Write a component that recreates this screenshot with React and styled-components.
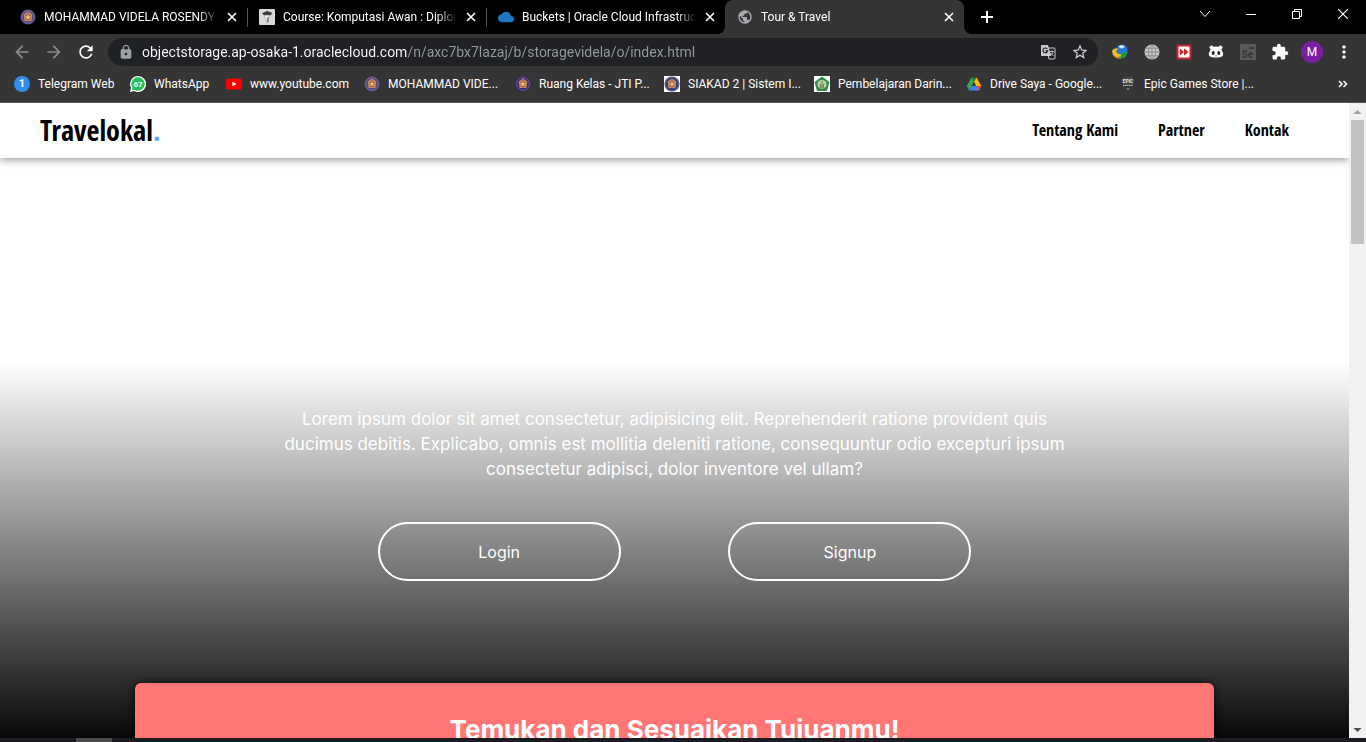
import React from "react";
import styled, { createGlobalStyle } from "styled-components";
import {
  MdArrowBack, MdArrowForward, MdRefresh, MdLock, MdStarBorder,
  MdExtension, MdMoreVert, MdPublic, MdCloud,
} from "react-icons/md";

const uiFont = `Roboto, "Open Sans", sans-serif`;
const siteFont = `Inter, "Open Sans", sans-serif`;
const displayFont = `"Liberation Sans Narrow", "Open Sans Condensed", "DejaVu Sans Condensed", sans-serif`;

const GlobalStyle = createGlobalStyle`
  * { box-sizing: border-box; }
  body { margin: 0; background: #fff; overflow: hidden; }
  button { font: inherit; color: inherit; background: none; border: 0; padding: 0; }
  a { color: inherit; text-decoration: none; }
`;

const Screen = styled.div`
  height: 100vh;
  display: flex;
  flex-direction: column;
  overflow: hidden;
`;

/* ---------- browser frame ---------- */

const TabStrip = styled.div`
  display: flex;
  height: 34px;
  flex: none;
  padding-left: 8px;
  background: #000;
  color: #fff;
  font-family: ${uiFont};
`;

const Tab = styled.div`
  position: relative;
  width: 239px;
  display: flex;
  align-items: center;
  gap: 8px;
  padding: 0 9px 0 12px;
  background: ${(p) => (p.$active ? "#353535" : "transparent")};
  border-radius: 8px 8px 0 0;

  &::before, &::after {
    content: "";
    display: ${(p) => (p.$active ? "block" : "none")};
    position: absolute;
    bottom: 0;
    width: 8px;
    height: 8px;
  }
  &::before {
    right: 100%;
    background: radial-gradient(circle at 0 0, transparent 8px, #353535 8px);
  }
  &::after {
    left: 100%;
    background: radial-gradient(circle at 100% 0, transparent 8px, #353535 8px);
  }
`;

const TabTitle = styled.span`
  flex: 1;
  min-width: 0;
  overflow: hidden;
  white-space: nowrap;
  font-size: 12px;
  line-height: 16px;
  mask-image: linear-gradient(to right, #000 calc(100% - 20px), transparent);
`;

const TabDivider = styled.span`
  position: absolute;
  left: 100%;
  top: 8px;
  width: 1px;
  height: 19px;
  background: #555;
`;

const IconButton = styled.button`
  width: ${(p) => p.$w || 32}px;
  height: ${(p) => p.$h || 32}px;
  flex: none;
  display: flex;
  align-items: center;
  justify-content: center;
  color: ${(p) => p.$color || "#fff"};
`;

const NewTab = styled(IconButton)`
  margin-left: 7px;
`;

const WindowControls = styled.div`
  display: flex;
  margin-left: auto;
`;

const Toolbar = styled.div`
  flex: none;
  height: 36px;
  display: flex;
  align-items: center;
  padding: 0 6px;
  background: #353535;
`;

const Omnibox = styled.div`
  flex: 1;
  height: 28px;
  margin: 0 6px;
  padding: 0 6px 0 10px;
  display: flex;
  align-items: center;
  gap: 8px;
  border-radius: 14px;
  background: #202124;
`;

const Address = styled.input`
  flex: 1;
  min-width: 0;
  border: 0;
  padding: 0;
  outline: 0;
  font-family: ${uiFont};
  font-size: 14px;
  line-height: 20px;
  color: transparent;
  background: linear-gradient(to right, #fff 266px, #969a9e 266px);
  background-clip: text;
  -webkit-background-clip: text;
`;

const Avatar = styled.span`
  width: 22px;
  height: 22px;
  border-radius: 50%;
  background: #7b1fa2;
  color: #fff;
  font: 12px/22px ${uiFont};
  text-align: center;
`;

const Bookmarks = styled.nav`
  flex: none;
  display: flex;
  align-items: center;
  height: 33px;
  padding: 0 7px 4px 14px;
  border-bottom: 1px solid #555;
  background: #353535;
  color: #fff;
  font-family: ${uiFont};
`;

const Bookmark = styled.a`
  flex: none;
  width: ${(p) => p.$w}px;
  display: flex;
  align-items: center;
  gap: 8px;
  font-size: 12px;
  line-height: 16px;
  white-space: nowrap;
`;

const MoreBookmarks = styled(IconButton)`
  margin-left: auto;
`;

const Badge = styled.span`
  width: 16px;
  height: 16px;
  flex: none;
  border-radius: 50%;
  background: #2f8df0;
  font: bold 11px/16px ${uiFont};
  text-align: center;
`;

const Viewport = styled.div`
  flex: 1;
  min-height: 0;
  display: flex;
`;

const Page = styled.div`
  flex: 1;
  min-width: 0;
  overflow: hidden;
  background: #000;
`;

const Scrollbar = styled.div`
  width: 17px;
  flex: none;
  display: flex;
  flex-direction: column;
  align-items: center;
  background: #f1f1f1;
`;

const Thumb = styled.div`
  width: 13px;
  height: 124px;
  margin-bottom: auto;
  background: #c1c1c1;
`;

const Taskbar = styled.div`
  flex: none;
  height: 4px;
  padding-left: 76px;
  background: #1b1c20;
`;

const TaskbarItem = styled.div`
  width: 36px;
  height: 4px;
  background: #4b4b4b;
`;

/* ---------- travel site ---------- */

const SiteHeader = styled.header`
  position: relative;
  z-index: 1;
  height: 55px;
  padding: 0 60px 2px 40px;
  display: flex;
  align-items: center;
  justify-content: space-between;
  background: #fff;
  color: #000;
  font-family: ${displayFont};
  font-weight: 800;
  box-shadow: 0 2px 8px rgba(0, 0, 0, 0.4);
`;

const Logo = styled.a`
  font-size: 28px;
  line-height: 32px;
  span { color: #5aa9ee; }
`;

const SiteNav = styled.nav`
  display: flex;
  gap: 40px;
  font-size: 16px;
  line-height: 24px;
`;

const Hero = styled.section`
  padding: 249px 0 169px;
  display: flex;
  flex-direction: column;
  align-items: center;
  gap: 40px;
  background: linear-gradient(to bottom, #fff 204px, #000 100%);
  color: #fff;
  font-family: ${siteFont};
  font-size: 16px;
`;

const Lead = styled.p`
  margin: 0;
  font-size: 17px;
  line-height: 25px;
  text-align: center;
`;

const Actions = styled.div`
  width: 100%;
  display: flex;
  justify-content: center;
  gap: 8%;
`;

const PillButton = styled.button`
  width: 18%;
  height: 59px;
  border: 2px solid #fff;
  border-radius: 30px;
`;

const Card = styled.section`
  position: relative;
  width: 80%;
  margin: -67px auto 0;
  padding: 28px 20px;
  border-radius: 6px;
  background: #ff7675;
  color: #fff;
  box-shadow: 0 0 10px rgba(0, 0, 0, 0.8);
  font-family: ${siteFont};
  text-align: center;
`;

const CardTitle = styled.h2`
  margin: 0;
  font-size: 26px;
  line-height: 38px;
`;

/* ---------- drawings ---------- */

const Svg = ({ size = 16, children }) => (
  <svg width={size} height={size} viewBox="0 0 16 16" fill="none" aria-hidden="true">
    {children}
  </svg>
);

const Crest = ({ ring = "#5b4a86", plate }) => (
  <Svg>
    {plate && <rect width="16" height="16" fill="#fff" />}
    <circle cx="8" cy="8" r="7.5" fill={ring} />
    <circle cx="8" cy="8" r="6.4" fill="none" stroke="#a08bb0" strokeWidth=".8" strokeDasharray="1 .8" />
    <path d="M8 2.5 12.3 5.6 11.4 12H4.6L3.7 5.6Z" fill="#c98a5b" />
    <path d="M8 4v2M5.4 6.4h5.2M5.6 8.4h4.8M6 10.4h4" stroke="#6b3f4d" strokeWidth=".7" />
    <path d="M8 5.8 10 8 8 10.4 6 8Z" fill="#f1bf63" />
  </Svg>
);

const GreenCrest = () => (
  <Svg>
    <rect width="16" height="16" fill="#fff" />
    <path d="M8 1 15 6.2 12.6 14.5H3.4L1 6.2Z" fill="#2e8b4e" stroke="#2e8b4e" strokeLinejoin="round" />
    <circle cx="8" cy="8.5" r="4.6" fill="#b9cf9f" />
    <path d="M8 5v5M6.5 8v3h3V8M5 12h6" stroke="#6b7f50" />
  </Svg>
);

const CourseIcon = () => (
  <Svg>
    <rect width="16" height="16" rx="1" fill="#d8d8d8" />
    <path d="M3 4.2 8 2l5 1.8-1 2.4H5Z" fill="#3b3b3b" />
    <path d="M5.5 6.2h5L9.8 9 8.6 10v4H7.4v-4L6 9Z" fill="#f5f5f5" stroke="#999" strokeWidth=".6" />
    <path d="M9 8v5" stroke="#444" />
  </Svg>
);

const WhatsApp = () => (
  <Svg>
    <path d="M8 0a8 8 0 1 1-3.8 15L0 16l1-4.2A8 8 0 0 1 8 0Z" fill="#fff" />
    <path d="M8 1.3a6.7 6.7 0 1 1-3.5 12.4l-2.7.6.7-2.6A6.7 6.7 0 0 1 8 1.3Z" fill="#25c05a" />
    <text x="8" y="11" fill="#fff" fontSize="8" fontWeight="bold" fontFamily="Roboto" textAnchor="middle">67</text>
  </Svg>
);

const YouTube = () => (
  <Svg>
    <rect y="2.4" width="16" height="11.2" rx="2.6" fill="#f00" />
    <path d="m6.4 5.7 4.2 2.3-4.2 2.3Z" fill="#fff" />
  </Svg>
);

const Drive = () => (
  <Svg>
    <path d="M5.5 1.5h5L8 5.8Z" fill="#188038" />
    <path d="M5.5 1.5 8 5.8 3.1 14.5.7 10Z" fill="#34a853" />
    <path d="M10.5 1.5 15.3 10h-5L8 5.8Z" fill="#fbbc04" />
    <path d="M5.7 10h9.6l-2.4 4.5H3.1Z" fill="#4285f4" />
    <path d="M10.3 10h5l-2.4 4.5Z" fill="#ea4335" />
  </Svg>
);

const Epic = () => (
  <Svg>
    <path d="M3 1h10v9H3Z" fill="#454545" />
    <text x="8" y="7" fill="#e4e4e4" fontSize="5" fontWeight="bold" fontFamily="Roboto" textAnchor="middle">EPIC</text>
    <path d="M3 9.5h10" stroke="#bbb" strokeDasharray="1.5 .5" />
    <path d="M6 12.5h4L8 14Z" fill="#aaa" />
  </Svg>
);

const Translate = () => (
  <Svg>
    <path d="M6.5 4H14a1 1 0 0 1 1 1v9a1 1 0 0 1-1 1H9Z" fill="#202124" stroke="#c7c9cc" />
    <path d="M1.5 1H8l3.2 11H1.5A.8.8 0 0 1 1 11.3V1.7A.8.8 0 0 1 1.5 1Z" fill="#c7c9cc" />
    <path d="M7.3 5A2.4 2.4 0 1 0 7.7 6.9H5.5" stroke="#202124" strokeWidth="1.2" />
    <path d="M9.5 7.5H14M11.8 6.5v1M13 7.5c-.4 2-1.5 3.3-3 4.2M10.5 9l3 3" stroke="#c7c9cc" strokeWidth=".9" />
  </Svg>
);

const DownloadGlobe = () => (
  <Svg>
    <circle cx="10" cy="6" r="5.5" fill="#2878d8" />
    <path d="M6.5 2.5c2-2 5-1.500 6 0-1 2.500-4 2.500-6 0Z" fill="#d8ecff" />
    <path d="M0 7c1.500-3 5-3.500 6-1.500-2.500.5-2 3.500 1 4.500l5 1-2 3c-4 1.500-9 0-10-7Z" fill="#e5c22c" />
    <path d="m9 8.5 7-.5-3 5.5-8 1 4-2.5Z" fill="#1f9b45" />
    <path d="M1 10.5c2 3 4 3 6 2.5" stroke="#e07028" />
  </Svg>
);

const WireGlobe = () => (
  <Svg>
    <circle cx="8" cy="8" r="7.5" fill="#c9c9c9" />
    <path d="M8 .5v15M.5 8h15M2 4.2h12M2 11.8h12M8 .5c-5 4-5 11 0 15M8 .5c5 4 5 11 0 15" stroke="#777" strokeWidth=".7" />
  </Svg>
);

const FastForward = () => (
  <Svg>
    <rect x=".5" y=".5" width="15" height="15" rx="1.5" fill="#c9252d" />
    <rect x="2.5" y="2.5" width="11" height="11" rx="1" fill="#fff" />
    <path d="m3.7 4.3 4.3 3.7-4.3 3.7ZM8 4.3 12.5 8 8 11.7Z" fill="#c9252d" />
  </Svg>
);

const Panda = () => (
  <Svg>
    <circle cx="3.5" cy="3.6" r="2" fill="#e8e8e8" />
    <circle cx="12.5" cy="3.6" r="2" fill="#e8e8e8" />
    <path d="M8 2.5c3.5 0 5.5 2 6 4.5 1.5 2 1.5 4 .5 5-1.5 2-11.5 2-13 0-1-1-1-3 .5-5 .5-2.5 2.5-4.5 6-4.5Z" fill="#fff" />
    <ellipse cx="5.2" cy="9" rx="1.5" ry="2" fill="#222" />
    <ellipse cx="10.8" cy="9" rx="1.5" ry="2" fill="#222" />
    <path d="M7 11.5h2L8 12.5Z" fill="#222" />
  </Svg>
);

const Selenium = () => (
  <Svg>
    <rect width="16" height="16" fill="#5a5a5a" />
    <path d="M9 4h5" stroke="#3a3a3a" strokeWidth="2" />
    <text x="1.5" y="14" fill="#353535" fontSize="10" fontWeight="bold" fontFamily="Roboto">Se</text>
  </Svg>
);

const Cross = ({ size = 10, width = 1.6 }) => (
  <svg width={size} height={size} viewBox="0 0 10 10" aria-hidden="true">
    <path d="m1 1 8 8M9 1 1 9" stroke="#fff" strokeWidth={width} />
  </svg>
);

const Arrow = ({ down }) => (
  <svg width="17" height="17" viewBox="0 0 17 17" aria-hidden="true">
    <path d={down ? "M4.5 7h8l-4 4Z" : "M4.5 11h8l-4-4Z"} fill={down ? "#505050" : "#a0a0a0"} />
  </svg>
);

const tabs = [
  { title: "MOHAMMAD VIDELA ROSENDY", icon: <Crest />, divider: true },
  { title: "Course: Komputasi Awan : Diploma", icon: <CourseIcon />, divider: true },
  { title: "Buckets | Oracle Cloud Infrastructure", icon: <MdCloud size={16} color="#2277c4" /> },
  { title: "Tour & Travel", icon: <MdPublic size={16} color="#a9adb1" />, active: true },
];

const bookmarks = [
  { label: "Telegram Web", w: 116, icon: <Badge>1</Badge> },
  { label: "WhatsApp", w: 96, icon: <WhatsApp /> },
  { label: "www.youtube.com", w: 138, icon: <YouTube /> },
  { label: "MOHAMMAD VIDE...", w: 151, icon: <Crest /> },
  { label: "Ruang Kelas - JTI P...", w: 149, icon: <Crest ring="#3c2a78" /> },
  { label: "SIAKAD 2 | Sistem I...", w: 150, icon: <Crest ring="#33406f" plate /> },
  { label: "Pembelajaran Darin...", w: 152, icon: <GreenCrest /> },
  { label: "Drive Saya - Google...", w: 154, icon: <Drive /> },
  { label: "Epic Games Store |...", w: 140, icon: <Epic /> },
];

const extensions = [
  { name: "Download manager", icon: <DownloadGlobe /> },
  { name: "Web globe", icon: <WireGlobe /> },
  { name: "Fast forward", icon: <FastForward /> },
  { name: "Panda", icon: <Panda /> },
  { name: "Selenium", icon: <Selenium /> },
  { name: "Extensions", icon: <MdExtension size={18} /> },
  { name: "Profile", icon: <Avatar>M</Avatar> },
  { name: "Menu", icon: <MdMoreVert size={20} /> },
];

export default function App() {
  return (
    <Screen>
      <GlobalStyle />
      <TabStrip>
        {tabs.map((t) => (
          <Tab key={t.title} $active={t.active}>
            {t.icon}
            <TabTitle>{t.title}</TabTitle>
            <IconButton $w={12} $h={16} aria-label="Close tab"><Cross /></IconButton>
            {t.divider && <TabDivider />}
          </Tab>
        ))}
        <NewTab $h={34} aria-label="New tab">
          <svg width="12" height="12" viewBox="0 0 12 12"><path d="M6 0v12M0 6h12" stroke="#fff" strokeWidth="2" /></svg>
        </NewTab>
        <WindowControls>
          <IconButton $w={46} $h={28} aria-label="Search tabs">
            <svg width="12" height="8" viewBox="0 0 12 8"><path d="m1 1 5 5.5L11 1" stroke="#fff" fill="none" /></svg>
          </IconButton>
          <IconButton $w={46} $h={28} aria-label="Minimize">
            <svg width="10" height="1" viewBox="0 0 10 1"><path d="M0 .5h10" stroke="#fff" /></svg>
          </IconButton>
          <IconButton $w={46} $h={28} aria-label="Restore">
            <svg width="10" height="10" viewBox="0 0 10 10"><path d="M.5 2.5h7v7h-7ZM2.5 2.5v-2h7v7h-2" stroke="#fff" fill="none" /></svg>
          </IconButton>
          <IconButton $w={46} $h={28} aria-label="Close"><Cross size={12} width={1} /></IconButton>
        </WindowControls>
      </TabStrip>

      <Toolbar>
        <IconButton $color="#8b8b8b" aria-label="Back"><MdArrowBack size={20} /></IconButton>
        <IconButton $color="#8b8b8b" aria-label="Forward"><MdArrowForward size={20} /></IconButton>
        <IconButton aria-label="Reload"><MdRefresh size={20} /></IconButton>
        <Omnibox>
          <MdLock size={16} color="#9aa0a6" />
          <Address
            aria-label="Address"
            defaultValue="objectstorage.ap-osaka-1.oraclecloud.com/n/axc7bx7lazaj/b/storagevidela/o/index.html"
          />
          <IconButton $w={24} $h={24} aria-label="Translate"><Translate /></IconButton>
          <IconButton $w={24} $h={24} $color="#d0d2d5" aria-label="Bookmark this page"><MdStarBorder size={18} /></IconButton>
        </Omnibox>
        {extensions.map((e) => (
          <IconButton key={e.name} aria-label={e.name}>{e.icon}</IconButton>
        ))}
      </Toolbar>

      <Bookmarks>
        {bookmarks.map((b) => (
          <Bookmark key={b.label} href="#" $w={b.w}>{b.icon}{b.label}</Bookmark>
        ))}
        <MoreBookmarks $h={16} aria-label="More bookmarks">
          <svg width="10" height="8" viewBox="0 0 10 8"><path d="m1 1 3 3-3 3M5.5 1l3 3-3 3" stroke="#fff" strokeWidth="1.5" fill="none" /></svg>
        </MoreBookmarks>
      </Bookmarks>

      <Viewport>
        <Page>
          <SiteHeader>
            <Logo href="#">Travelokal<span>.</span></Logo>
            <SiteNav>
              <a href="#tentang">Tentang Kami</a>
              <a href="#partner">Partner</a>
              <a href="#kontak">Kontak</a>
            </SiteNav>
          </SiteHeader>
          <Hero>
            <Lead>
              Lorem ipsum dolor sit amet consectetur, adipisicing elit. Reprehenderit ratione provident quis
              <br />
              ducimus debitis. Explicabo, omnis est mollitia deleniti ratione, consequuntur odio excepturi ipsum
              <br />
              consectetur adipisci, dolor inventore vel ullam?
            </Lead>
            <Actions>
              <PillButton>Login</PillButton>
              <PillButton>Signup</PillButton>
            </Actions>
          </Hero>
          <Card>
            <CardTitle>Temukan dan Sesuaikan Tujuanmu!</CardTitle>
          </Card>
        </Page>
        <Scrollbar>
          <Arrow />
          <Thumb />
          <Arrow down />
        </Scrollbar>
      </Viewport>
      <Taskbar><TaskbarItem /></Taskbar>
    </Screen>
  );
}
